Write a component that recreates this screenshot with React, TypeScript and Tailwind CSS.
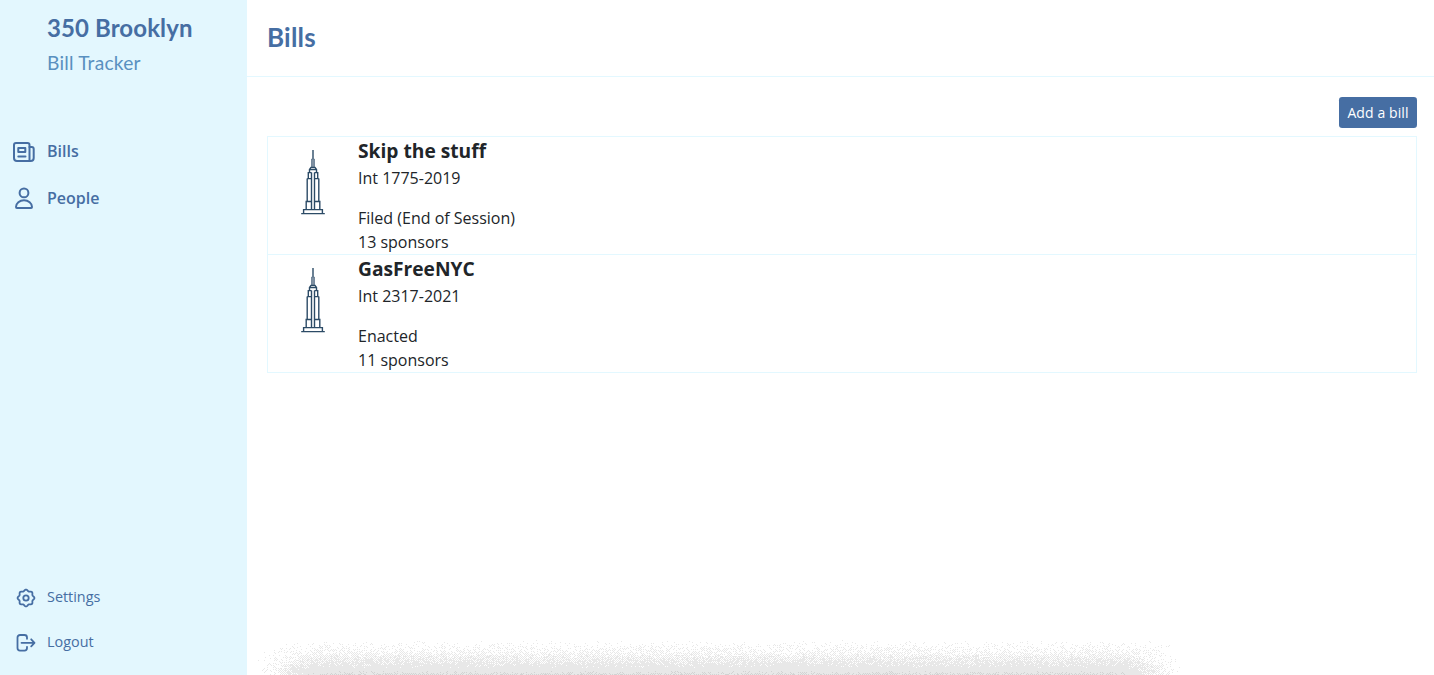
import React from 'react';

type Bill = { name: string; file: string; status: string; sponsors: number };

const bills: Bill[] = [
  { name: 'Skip the stuff', file: 'Int 1775-2019', status: 'Filed (End of Session)', sponsors: 13 },
  { name: 'GasFreeNYC', file: 'Int 2317-2021', status: 'Enacted', sponsors: 11 },
];

const stroke = {
  fill: 'none',
  stroke: 'currentColor',
  strokeLinecap: 'round' as const,
  strokeLinejoin: 'round' as const,
};

function BillsIcon() {
  return (
    <svg width="24" height="24" viewBox="0 0 24 24" strokeWidth="2" {...stroke}>
      <path d="M17.500 21H5a3 3 0 0 1-3-3V5a2 2 0 0 1 2-2h11.500a2 2 0 0 1 2 2v16Z" />
      <path d="M17.500 7h2.200a2 2 0 0 1 2 2v9a3 3 0 0 1-3 3h-1.200" />
      <path d="M6.300 8h7v4h-7zM6.300 16.600h7.200" />
    </svg>
  );
}

function PersonIcon() {
  return (
    <svg width="24" height="24" viewBox="0 0 24 24" strokeWidth="2" {...stroke}>
      <circle cx="12" cy="5.900" r="4.400" />
      <path d="M4 20.100a8 6.800 0 0 1 16 0 .9.9 0 0 1-.9.900H4.900a.9.9 0 0 1-.9-.900Z" />
    </svg>
  );
}

const gearOutline =
  Array.from({ length: 96 }, (_, i) => {
    const a = (i / 96) * Math.PI * 2;
    const r = 7.7 + 0.7 * Math.cos(8 * a);
    return `${i ? 'L' : 'M'}${(10 + r * Math.sin(a)).toFixed(2)} ${(10 - r * Math.cos(a)).toFixed(2)}`;
  }).join('') + 'Z';

function SettingsIcon() {
  return (
    <svg width="20" height="20" viewBox="0 0 20 20" strokeWidth="1.8" {...stroke}>
      <circle cx="10" cy="10" r="2.700" />
      <path d={gearOutline} />
    </svg>
  );
}

function LogoutIcon() {
  return (
    <svg width="20" height="20" viewBox="0 0 20 20" strokeWidth="1.8" {...stroke}>
      <path d="M11 5.800V4.500A2.500 2.500 0 0 0 8.500 2H4a2.500 2.500 0 0 0-2.500 2.500v10.600A2.500 2.500 0 0 0 4 17.600h4.500a2.500 2.500 0 0 0 2.500-2.500v-1.300" />
      <path d="M5.500 9.800H18.200M15.200 6.300l3.300 3.500-3.300 3.500" />
    </svg>
  );
}

function TowerIcon() {
  return (
    <svg width="24" height="65" viewBox="0 0 24 65" fill="none" stroke="#2c4b66" strokeWidth="1.400">
      <path d="M12 0v9" />
      <path d="M10.700 17.500V9h2.600v8.500" fill="#8798a8" stroke="#5f768c" strokeWidth="1" />
      <path d="M8.500 22.500V19.500l1.500-2h4l1.500 2v3" />
      <path d="M8.500 19.600h7M10.500 22.500v37M13.500 22.500v37" />
      <path d="M7.300 28.500V22.600h3.200M16.700 28.500v-5.900h-3.200M6.200 28.600h4.300M13.500 28.600h4.300M6.200 28.600V52M17.800 28.600V52" />
      <path d="M5.200 59.500V51.500h5.300M18.800 59.500V51.500h-5.300" />
      <path d="M2.600 63.500V59.600h18.800v3.900M.2 63.600h23.600" />
    </svg>
  );
}

function hash(x: number, y: number) {
  let h = (Math.imul(x + 11, 374761393) + Math.imul(y + 7, 668265263)) | 0;
  h = Math.imul(h ^ (h >>> 13), 1274126177);
  return ((h ^ (h >>> 16)) >>> 0) / 4294967296;
}

// Checkerboard-weighted threshold keeps neighbouring dots apart.
function threshold(x: number, y: number) {
  const parity = (x + y) & 1 ? 0.5 : 0;
  return 0.8 * parity + 0.02 + 0.56 * hash(x, y);
}

function ramp(v: number) {
  const t = Math.max(0, Math.min(1, v));
  return t * t * (3 - 2 * t);
}

function stipple(first: number, depth: number, inset: number, reach: number) {
  let d = '';
  for (let y = first; y < 36; y++) {
    const level = Math.min(1.06, Math.pow((y - first + 1) / depth, 1.35));
    for (let x = inset; x < 932 - inset; x++) {
      const edge = ramp((Math.min(x - inset, 932 - inset - x) + 4) / reach);
      if (threshold(x, y) < level * edge) d += `M${x} ${y}h1v1h-1z`;
    }
  }
  return d;
}

const lightDots = stipple(0, 30, 0, 70);
const darkDots = stipple(32, 7, 50, 50);

function FooterShadow() {
  return (
    <svg width="932" height="36" className="pointer-events-none absolute bottom-0 left-[253px]" shapeRendering="crispEdges" aria-hidden="true">
      <path d={lightDots} fill="#e8e8e8" />
      <path d={darkDots} fill="#d2d2d2" />
    </svg>
  );
}

export default function App() {
  return (
    <div className="relative flex h-[675px] w-full overflow-hidden bg-white font-['Open_Sans',sans-serif] text-[#212529]">
      <aside className="flex w-[247px] shrink-0 flex-col bg-[#e3f7fe] text-[#466ea3]">
        <div className="pt-[10px] pl-[47px] font-['Lato',sans-serif]">
          <div className="text-[24px] leading-9 font-bold tracking-[0.1px]">350 Brooklyn</div>
          <div className="text-[19.2px] leading-[34px] tracking-[0.2px] text-[#5990c0]">Bill Tracker</div>
        </div>
        <nav className="mt-12 flex flex-col font-semibold">
          <a className="flex h-[47px] items-center gap-[11px] pl-3"><BillsIcon /><span className="pb-0.5">Bills</span></a>
          <a className="flex h-[47px] items-center gap-[11px] pl-3"><PersonIcon /><span className="pb-0.5">People</span></a>
        </nav>
        <div className="mt-auto flex flex-col pb-[11px] text-[14.4px]">
          <a className="flex h-[45px] items-center gap-[11px] pl-4"><span className="pt-0.5"><SettingsIcon /></span><span>Settings</span></a>
          <a className="flex h-[45px] items-center gap-[11px] pl-4"><span className="pt-0.5"><LogoutIcon /></span><span>Logout</span></a>
        </div>
      </aside>
      <main className="flex min-w-0 flex-1 flex-col">
        <header className="flex h-[77px] items-center border-b border-[#e3f8ff] pb-0.5 pl-5 font-['Lato',sans-serif] text-[26px] font-bold tracking-[0.2px] text-[#466ea3]">
          <h1>Bills</h1>
        </header>
        <div className="flex flex-col pt-5 pr-[17px] pl-5">
          <button className="mb-2 h-[31px] w-[78px] self-end rounded-[3.2px] bg-[#466ea3] text-[14px] leading-[31px] tracking-[0.1px] text-white">Add a bill</button>
          <div className="border-x border-t border-[#e3f8ff]">
            {bills.map((bill) => (
              <article key={bill.name} className="flex h-[118px] border-b border-[#e3f8ff]">
                <div className="flex w-[90px] shrink-0 justify-center pt-[13px]"><TowerIcon /></div>
                <div>
                  <h2 className="pb-px text-[19.2px] leading-7 font-bold">{bill.name}</h2>
                  <div className="mb-4 leading-6">{bill.file}</div>
                  <div className="leading-6">{bill.status}</div>
                  <div className="leading-6">{bill.sponsors} sponsors</div>
                </div>
              </article>
            ))}
          </div>
        </div>
      </main>
      <FooterShadow />
    </div>
  );
}
